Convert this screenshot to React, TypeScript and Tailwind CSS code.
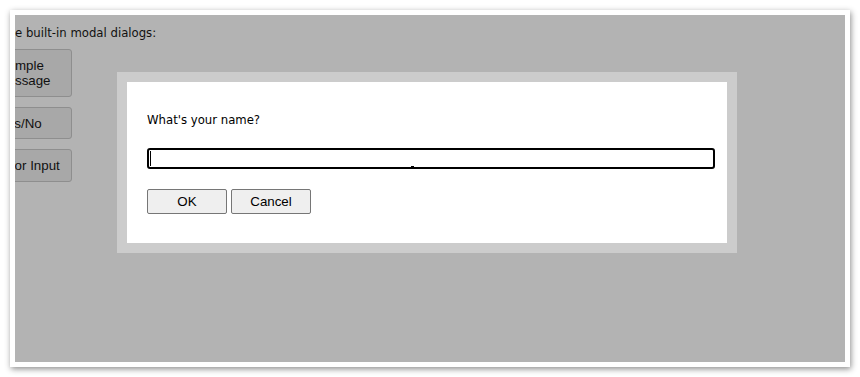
import React from 'react';

const pageFont = { fontFamily: '"DejaVu Sans", Verdana, sans-serif' };
const buttonFont = { fontFamily: '"Liberation Sans", Arial, sans-serif' };

// Buttons of the page behind the modal; the page is scrolled so their left part is cut off.
const pageButtons = [
  { label: 'Simple Message', width: 'w-[97px] h-[48px]' },
  { label: 'Yes/No', width: 'w-[103px] h-[32px]' },
  { label: 'Prompt for Input', width: 'w-[120px] h-[33px]' },
];

const PromptDialog = () => (
  <div className="absolute left-[102px] top-[57px] w-[620px] h-[181px] bg-[#cccccc] p-[10px]">
    <div className="h-full bg-white px-5 pt-[31px]">
      <p className="text-[11.7px] leading-[15px] text-black" style={pageFont}>
        What&apos;s your name?
      </p>
      <div className="relative mt-[20px] h-[21px] w-[568px] rounded-[3px] border-2 border-black bg-white">
        <span className="absolute left-[1px] top-[1px] h-[15px] w-px bg-black" />
        <span className="absolute left-[262px] bottom-0 h-px w-[3px] bg-black" />
      </div>
      <div className="mt-[20px] flex gap-1" style={buttonFont}>
        <button className="h-[25px] w-[80px] rounded-[2px] border border-[#767676] bg-[#efefef] text-[13.33px] text-black">
          OK
        </button>
        <button className="h-[25px] w-[80px] rounded-[2px] border border-[#767676] bg-[#efefef] text-[13.33px] text-black">
          Cancel
        </button>
      </div>
    </div>
  </div>
);

export default function App() {
  return (
    <div className="w-[860px] h-[377px] bg-white p-[10px]">
      <div className="h-[357px] w-[840px] bg-white p-[5px] shadow-[1px_2px_6px_rgba(0,0,0,0.45)]">
        <div className="relative h-full overflow-hidden bg-[#b3b3b3]">
          <div className="pt-[11px]">
            <p className="text-[11.7px] leading-[15px] text-[#111]" style={pageFont}>
              e built-in modal dialogs:
            </p>
            <div className="mt-[8px] flex w-[57px] flex-col items-end gap-[10px]" style={buttonFont}>
              {pageButtons.map((b) => (
                <button
                  key={b.label}
                  className={`${b.width} shrink-0 rounded-[3px] border border-[#8e8e8e] bg-[#a8a8a8] text-[13.33px] leading-[15px] text-[#111]`}
                >
                  {b.label}
                </button>
              ))}
            </div>
          </div>
          <PromptDialog />
        </div>
      </div>
    </div>
  );
}
